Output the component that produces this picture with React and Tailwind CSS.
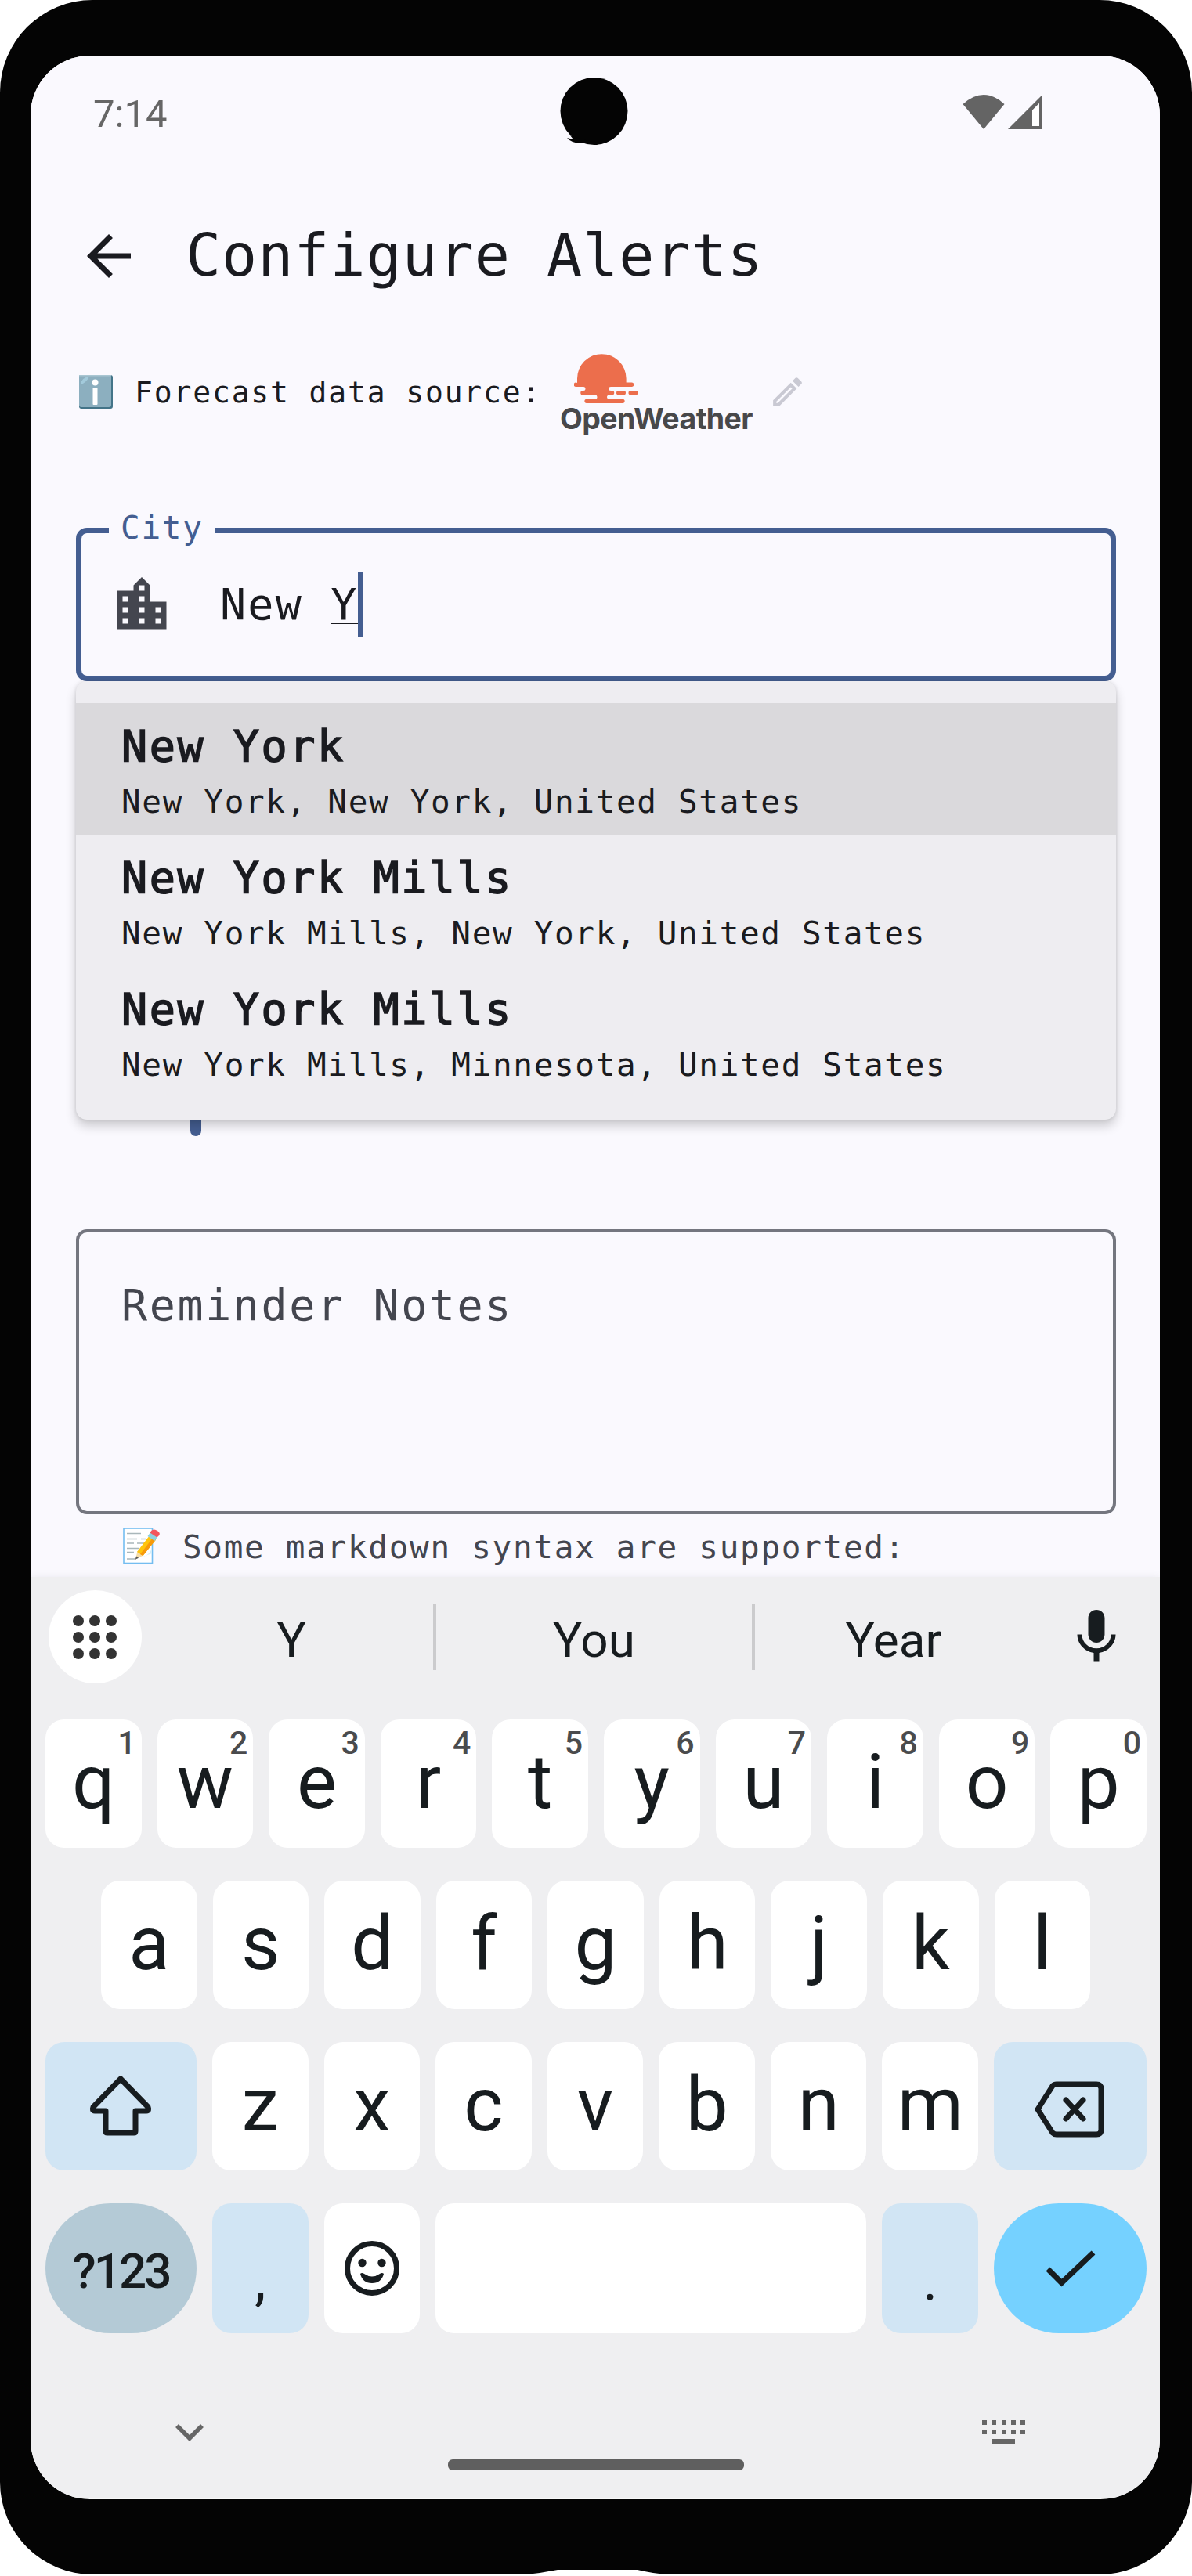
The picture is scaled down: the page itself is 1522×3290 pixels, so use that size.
import React from "react";

const MONO = "font-['DejaVu_Sans_Mono',monospace]";

function StatusBar() {
  return (
    <div className="relative flex h-[143px] shrink-0 items-center justify-between pl-20 pr-[150px]">
      <span className="pt-1.5 text-[49px] leading-[56px] text-[#666666]">7:14</span>
      <div className="flex gap-[4px]">
        <svg width="54" height="46" viewBox="0 0 54 46" fill="#646464">
          <path d="M0.500 13Q27 -11 53.500 13L27 45Z" />
        </svg>
        <svg width="44" height="46" viewBox="0 0 44 46" fill="#646464">
          <path fillRule="evenodd" d="M44 1V45H0ZM40 12L31 21V41H40Z" />
          <path d="M40 12L31 21V41H40Z" fill="#fff" />
        </svg>
      </div>
      <svg className="absolute left-[675px] top-[28px]" width="90" height="86" viewBox="0 0 90 86" fill="#040404">
        <circle cx="44.500" cy="43" r="43" />
        <path d="M10 77L18 79L14 74L34 80L55 84H28Q16 84 10 77Z" />
      </svg>
    </div>
  );
}

function AppBar() {
  return (
    <div className="flex h-[226px] shrink-0 items-center pl-[58px]">
      <svg width="84" height="84" viewBox="0 0 24 24" fill="#1a1b20">
        <path d="M20 11H7.830l5.590-5.590L12 4l-8 8 8 8 1.410-1.410L7.830 13H20v-2z" />
      </svg>
      <h1 className={`${MONO} -mt-0.5 ml-[56px] text-[75px] leading-[98px] tracking-[0.950px] text-[#1a1b20]`}>Configure Alerts</h1>
    </div>
  );
}

function SourceRow() {
  return (
    <div className="flex h-[120px] shrink-0 items-center">
      <svg className="ml-1" width="43" height="43" viewBox="0 0 43 43">
        <rect width="43" height="43" rx="3" fill="#437488" />
        <rect width="41" height="41" rx="3" fill="#8cafbf" />
        <path d="M2 12Q3 3 13 2Q9 10 2 12Z" fill="#a3cadb" />
        <rect width="41" height="1.500" fill="#a9c6d2" />
        <circle cx="20.500" cy="9.500" r="4" fill="#fff" />
        <rect x="17.500" y="16" width="6" height="22" rx="1" fill="#fff" />
      </svg>
      <span className={`${MONO} ml-7 w-[540px] whitespace-nowrap pt-px text-[38px] leading-[52px] tracking-[1.850px] text-[#1a1b20]`}>
        Forecast data source:
      </span>
      <div className="flex w-[250px] flex-col pl-[5px] pt-[9px]">
        <svg className="ml-[16px]" width="82" height="64" viewBox="0 0 82 64" fill="#ec6e4c">
          <path d="M4 37V31.500A31.300 31.300 0 0 1 66.600 31.500V36.500H73.500A2.700 2.700 0 0 1 73.500 42H47Q44 42 44 44.500T47 47H48.500A2.600 2.600 0 0 1 48.500 52.500H45Q42 52.500 42 55T45 57.700H62A2.600 2.600 0 0 1 62 63H16A2.600 2.600 0 0 1 16 57.700H27Q29.500 57.700 29.500 55T27 52.500H11A2.700 2.700 0 0 1 11 47H12Q14.500 47 14.500 44.500T12 42H2.500A2.700 2.700 0 0 1 2.500 36.500Z" />
          <rect x="54" y="47" width="12" height="5.500" rx="2.700" />
          <rect x="69.500" y="47" width="12" height="5.500" rx="2.700" />
        </svg>
        <span className="-ml-0.5 -mt-px h-[42px] whitespace-nowrap font-['Inter',sans-serif] text-[37.500px] font-bold leading-[40px] tracking-[-0.600px] text-[#48484a]">
          OpenWeather
        </span>
      </div>
      <svg className="ml-[19px]" width="49" height="49" viewBox="0 0 24 24" fill="#c9c9d3">
        <path d="M14.060 9.020l.92.920L5.920 19H5v-.920l9.060-9.060M17.660 3c-.250 0-.510.100-.700.290l-1.830 1.830 3.750 3.750 1.830-1.830c.390-.390.390-1.020 0-1.410l-2.340-2.340c-.200-.200-.450-.290-.710-.290zm-3.600 3.190L3 17.250V21h3.750L17.810 9.940l-3.750-3.750z" />
      </svg>
    </div>
  );
}

const places = [
  ["New York", "New York, New York, United States"],
  ["New York Mills", "New York Mills, New York, United States"],
  ["New York Mills", "New York Mills, Minnesota, United States"],
];

function CityField() {
  return (
    <div className={`${MONO} relative mt-[114px] h-[196px] shrink-0 rounded-[14px] border-[7px] border-[#445e91]`}>
      <span className="absolute -top-[30px] left-[35px] h-[46px] w-[135px] bg-[#faf9fe] pl-[15px] text-[41px] leading-[46px] tracking-[1.700px] text-[#445e91]">
        City
      </span>
      <div className="flex pl-[35px] pt-[50px]">
        <svg className="-mt-px" width="84" height="84" viewBox="0 0 24 24" fill="#44464f">
          <path d="M15 11V5l-3-3-3 3v2H3v14h18V11h-6zm-8 8H5v-2h2v2zm0-4H5v-2h2v2zm0-4H5V9h2v2zm6 8h-2v-2h2v2zm0-4h-2v-2h2v2zm0-4h-2V9h2v2zm0-4h-2V5h2v2zm6 12h-2v-2h2v2zm0-4h-2v-2h2v2z" />
        </svg>
        <span className="-mt-px ml-[58px] w-[176px] whitespace-pre text-[55px] leading-[84px] tracking-[2.200px] text-[#1a1b20]">
          New <span className="underline decoration-1 underline-offset-[5px]">Y</span>
        </span>
        <span className="-mt-px h-[84px] w-[7px] bg-[#445e91]" />
      </div>
      <span className="absolute left-[139px] top-[740px] h-[30px] w-[14px] rounded-b-full bg-[#445e91]" />
      <div className="absolute -left-[7px] top-[189px] z-10 h-[560px] w-[1328px] rounded-[14px] bg-[#eeedf1] pt-7 shadow-[0_8px_14px_rgba(0,0,0,0.19),0_0_5px_rgba(0,0,0,0.12)]">
        {places.map(([name, detail], i) => (
          <div key={i} className={`h-[168px] pl-[58px] pt-[13px] text-[#1a1b20] ${i === 0 ? "bg-[#dad9dc]" : ""}`}>
            <div className="h-[85px] text-[55px] leading-[84px] tracking-[2.600px] [-webkit-text-stroke:1.600px_#1a1b20]">{name}</div>
            <div className="whitespace-nowrap text-[41px] leading-[56px] tracking-[1.650px]">{detail}</div>
          </div>
        ))}
      </div>
    </div>
  );
}

function Notes() {
  return (
    <>
      <div className={`${MONO} mt-[700px] h-[364px] shrink-0 rounded-[14px] border-4 border-[#74767f] pl-[54px] pt-[51px] text-[55px] leading-[84px] tracking-[2.600px] text-[#44464f]`}>
        Reminder Notes
      </div>
      <div className="flex h-20 shrink-0 items-center pl-[60px]">
        <svg width="47" height="48" viewBox="0 0 47 48">
          <rect x="1" y="2" width="36.500" height="44.500" fill="#fff" stroke="#74bdf0" strokeWidth="1.600" />
          <path d="M5 8.500h18M5 15.500h13M23 15.500h6M5 21h9M18 21h9M5 27.500h16M5 32.500h9M5 41h12" stroke="#a9b7ba" strokeWidth="1.400" />
          <path d="M37 27Q34 37 23 39L37 34Z" fill="#d4edf8" />
          <path d="M16 41.500L18.500 31L26 36.500Z" fill="#f5dca6" />
          <path d="M16 41.500L17 37.500L20 39.800Z" fill="#555" />
          <path d="M18 32L34 11L42 16.500L25.500 37Z" fill="#ffc40c" />
          <path d="M22 35L38.500 13.500L42 16.500L25.500 37Z" fill="#f79a0c" />
          <path d="M31.500 12L35 7L44 13L40.500 18Z" fill="#8ed1df" />
          <path d="M34.500 7.500Q38 1 44 5T43.500 13.500Z" fill="#f2555c" />
        </svg>
        <span className={`${MONO} ml-[29px] whitespace-nowrap pt-1 text-[41px] leading-[56px] tracking-[1.690px] text-[#44464f]`}>
          Some markdown syntax are supported:
        </span>
      </div>
    </>
  );
}

function Key({ children, hint, className = "flex-1 bg-white" }) {
  return (
    <div className={`relative flex items-center justify-center rounded-[24px] pb-1 text-[96px] leading-none ${className}`}>
      {children}
      {hint && <span className="absolute right-[7px] top-[9px] text-[41px] font-medium leading-[42px] text-[#4a4b4d]">{hint}</span>}
    </div>
  );
}

function Keyboard() {
  return (
    <div className="relative flex h-[1176px] shrink-0 flex-col bg-[#efeff1] text-[#171c1f] shadow-[0_0_9px_rgba(120,120,130,0.12)]">
      <div className="flex h-[153px] items-center pl-[23px] text-[62px] leading-[80px]">
        <div className="flex size-[119px] items-center justify-center rounded-full bg-white">
          <div className="grid grid-cols-3 gap-[7px] pr-px">
            {Array.from({ length: 9 }, (_, i) => (
              <span key={i} className="size-[14px] rounded-full bg-[#333]" />
            ))}
          </div>
        </div>
        <span className="w-[372px] pl-2.5 pt-2 text-center">Y</span>
        <span className="h-[84px] w-1 bg-[#cbcbcd]" />
        <span className="w-[403px] pt-2 text-center">You</span>
        <span className="h-[84px] w-1 bg-[#cbcbcd]" />
        <span className="w-[354px] pt-2 text-center">Year</span>
        <svg className="ml-[40px]" width="84" height="84" viewBox="0 0 24 24">
          <path d="M12 14c1.660 0 2.990-1.340 2.990-3L15 5c0-1.660-1.340-3-3-3S9 3.340 9 5v6c0 1.660 1.340 3 3 3zm5.300-3c0 3-2.540 5.100-5.300 5.100S6.700 14 6.700 11H5c0 3.410 2.720 6.230 6 6.720V21h2v-3.280c3.280-.480 6-3.300 6-6.720h-1.700z" fill="#171c1f" />
        </svg>
      </div>
      <div className="mt-[29px] flex flex-col gap-[42px] pl-[19px] pr-[17px]">
        <div className="flex h-[164px] gap-5">
          {"qwertyuiop".split("").map((k, i) => (
            <Key key={k} hint={String((i + 1) % 10)}>{k}</Key>
          ))}
        </div>
        <div className="flex h-[164px] gap-5 pl-[71px] pr-[72px]">
          {"asdfghjkl".split("").map((k) => (
            <Key key={k}>{k}</Key>
          ))}
        </div>
        <div className="flex h-[164px] gap-5">
          <Key className="w-[193px] bg-[#d1e5f4]">
            <svg width="84" height="84" viewBox="0 0 84 84" fill="none" stroke="#171c1f" strokeWidth="7" strokeLinejoin="round">
              <path d="M41 9L6 45Q4 50 8 50H22V76Q22 78 24 78H58Q60 78 60 76V50H74Q78 50 76 45Z" />
            </svg>
          </Key>
          {"zxcvbnm".split("").map((k) => (
            <Key key={k}>{k}</Key>
          ))}
          <Key className="w-[195px] bg-[#d1e5f4]">
            <svg className="mr-1 mt-[11px]" width="92" height="74" viewBox="0 0 92 74" fill="none" stroke="#171c1f" strokeWidth="7" strokeLinejoin="round" strokeLinecap="round">
              <path d="M6 37L25 7Q27 5 30 5H81Q87 5 87 11V63Q87 69 81 69H30Q27 69 25 67Z" />
              <path d="M42 25L64 49M64 25L42 49" />
            </svg>
          </Key>
        </div>
        <div className="flex h-[166px] gap-5">
          <div className="flex w-[193px] items-center justify-center rounded-full bg-[#b4cad6] pt-2 text-[62px] font-medium leading-none tracking-[-3px]">?123</div>
          <Key className="w-[122.600px] bg-[#d1e5f4]"><span className="mt-9 text-[72px] leading-none">,</span></Key>
          <Key className="w-[122.600px] bg-white">
            <svg className="mt-1" width="72" height="72" viewBox="0 0 72 72">
              <circle cx="36" cy="36" r="31.500" fill="none" stroke="#171c1f" strokeWidth="7" />
              <circle cx="23.500" cy="29" r="5.200" fill="#171c1f" />
              <circle cx="48.500" cy="29" r="5.200" fill="#171c1f" />
              <path d="M21 43Q23 41 26 43Q36 50 46 43Q49 41 51 43Q48 55 36 55T21 43Z" fill="#171c1f" />
            </svg>
          </Key>
          <Key className="flex-1 bg-white" />
          <Key className="w-[122.600px] bg-[#d1e5f4]"><span className="mt-9 text-[72px] leading-none">.</span></Key>
          <div className="flex w-[195px] items-center justify-center rounded-full bg-[#75d1ff] pt-1">
            <svg width="64" height="50" viewBox="0 0 64 50" fill="none" stroke="#171c1f" strokeWidth="7">
              <path d="M3 24L20.500 41.500L61 3" />
            </svg>
          </div>
        </div>
      </div>
      <div className="mt-[110px] flex items-start justify-between pl-[185px] pr-[172px]">
        <svg className="mt-[5px]" width="36" height="24" viewBox="0 0 36 24" fill="none" stroke="#666" strokeWidth="5.500">
          <path d="M2 3L18 19L34 3" />
        </svg>
        <div className="flex w-[55px] flex-col items-center gap-1.5 pt-px">
          {[0, 1].map((r) => (
            <div key={r} className="flex w-full justify-between">
              {[0, 1, 2, 3, 4].map((c) => (
                <span key={c} className="size-1.5 bg-[#666]" />
              ))}
            </div>
          ))}
          <span className="h-1.5 w-[29px] bg-[#666]" />
        </div>
      </div>
      <span className="absolute bottom-[35px] left-[533px] h-[14px] w-[378px] rounded-[6px] bg-[#5f5f5f]" />
    </div>
  );
}

export default function App() {
  return (
    <div className="h-[3290px] w-[1522px] bg-white font-['Roboto',sans-serif]">
      <div className="relative h-[3288px] rounded-[118px] bg-[#040404] pl-[39px] pt-[71px]">
        <div className="flex h-[3121px] w-[1442px] flex-col overflow-hidden rounded-[76px] bg-white">
          <div className="flex h-[1943px] shrink-0 flex-col bg-[#faf9fe]">
            <StatusBar />
            <AppBar />
            <div className="flex flex-col pl-[58px] pr-[56px]">
              <SourceRow />
              <CityField />
              <Notes />
            </div>
          </div>
          <Keyboard />
        </div>
        <svg className="absolute bottom-0 left-[672px]" width="182" height="6" viewBox="0 0 182 6" fill="#fff">
          <path d="M0 6Q20 4 40 0H142Q162 5 182 6Z" />
        </svg>
      </div>
    </div>
  );
}
